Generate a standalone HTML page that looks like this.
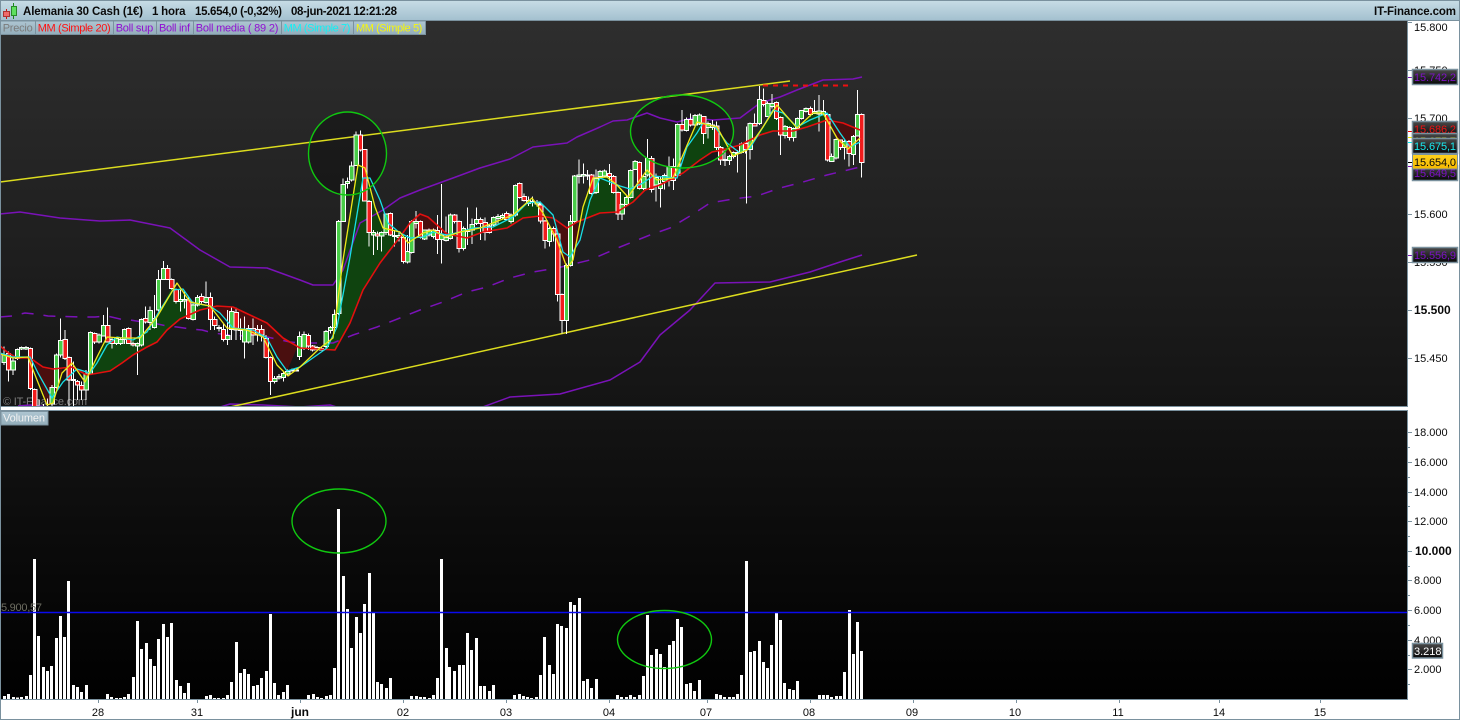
<!DOCTYPE html>
<html lang="es"><head><meta charset="utf-8"><title>Alemania 30 Cash</title>
<style>
html,body{margin:0;padding:0;background:#fff;width:1460px;height:720px;overflow:hidden}
svg{display:block}
text{font-family:"Liberation Sans",sans-serif;font-size:11px}
.b{font-weight:bold;font-size:11.5px;fill:#0a0a0a}
.w{stroke:#fff;stroke-width:3;fill:none;shape-rendering:crispEdges}
rect.g,rect.r{width:13px;stroke:#fff;stroke-width:3;shape-rendering:crispEdges}
rect.g{fill:#48cc48}rect.r{fill:#f01c1c}
.v{stroke:#fff;stroke-width:9;fill:none;shape-rendering:crispEdges}
.l{fill:none;stroke-linejoin:round}
.btn{fill:url(#bt);stroke:#7a919e;stroke-width:1}
.box{stroke:#7a919e;stroke-width:1.5}
.t{stroke:#7a919e;stroke-width:1;fill:none;shape-rendering:crispEdges}
</style></head><body>
<svg width="1460" height="720" viewBox="0 0 1460 720" xmlns="http://www.w3.org/2000/svg">
<defs>
<linearGradient id="top" x1="0" y1="0" x2="0" y2="1"><stop offset="0" stop-color="#c8dde6"/><stop offset="1" stop-color="#a3c0cf"/></linearGradient>
<linearGradient id="bt" x1="0" y1="0" x2="0" y2="1"><stop offset="0" stop-color="#aec6d2"/><stop offset="1" stop-color="#93adba"/></linearGradient>
<linearGradient id="p1" x1="0" y1="0" x2="0" y2="1"><stop offset="0" stop-color="#2e2e2e"/><stop offset="1" stop-color="#141414"/></linearGradient>
<linearGradient id="p2" x1="0" y1="0" x2="0" y2="1"><stop offset="0" stop-color="#141414"/><stop offset="1" stop-color="#000"/></linearGradient>
<linearGradient id="dk" x1="0" y1="0" x2="0" y2="1"><stop offset="0" stop-color="#4a4a4a"/><stop offset="1" stop-color="#060606"/></linearGradient>
<linearGradient id="au" x1="0" y1="0" x2="0" y2="1"><stop offset="0" stop-color="#ffd21c"/><stop offset="1" stop-color="#f5b800"/></linearGradient>
<clipPath id="c1"><rect x="1" y="21" width="1406" height="385"/></clipPath>
</defs>

<rect width="1460" height="720" fill="#fff"/>
<rect x="0" y="0" width="1460" height="20.5" fill="url(#top)"/>
<path d="M0 .5H1460M0 20.5H1460" class="t"/>

<!-- price panel -->
<rect x="1" y="21" width="1406" height="385" fill="url(#p1)"/>
<!-- volume panel -->
<rect x="1" y="410.5" width="1406" height="288.5" fill="url(#p2)"/>
<path d="M.5 0V720M1407.5 21V407M1407.5 410V700M0 406.5H1408M0 410.5H1408M0 699.5H1408M0 719.5H1460M1459.5 0V720" class="t"/>

<g clip-path="url(#c1)">
<ellipse cx="347.5" cy="153.5" rx="39" ry="41.5" fill="#000" fill-opacity=".3"/>
<ellipse cx="682" cy="131.5" rx="51.5" ry="36.5" fill="#000" fill-opacity=".3"/>
<text x="3" y="405" fill="#7c7c7c" textLength="84">© IT-Finance.com</text>

<!-- MA fills -->
<g fill="#0f430f">
<polygon points="90,373 97,357 107,337 133,339 147,332 160,310 173,285 190,302 208,306 200,310 180,319 167,330 157,342 147,347 133,355 122,363 110,371"/>
<polygon points="325,350 333,338 343,260 358,165 365,168 375,207 383,228 400,233 408,238 400,237 380,263 363,290 350,323 335,350"/>
<polygon points="447,235 460,232 480,228 513,215 532,198 543,210 553,218 540,216 523,218 507,228 483,232 467,238"/>
<polygon points="578,222 583,207 593,178 607,177 617,185 628,197 640,182 647,170 657,180 677,178 697,122 717,127 730,148 722,150 712,152 700,160 683,173 660,185 645,190 633,202 617,212 600,213"/>
<polygon points="745,147 763,127 777,105 797,128 813,113 823,113 829,120 807,127 793,131 773,131 760,135"/>
</g>
<g fill="#4a0f0f">
<polygon points="33,358 43,367 53,369 62,368 62,373 53,403 47,405 38,373"/>
<polygon points="210,306 217,306 233,307 250,315 267,323 283,338 297,348 287,371 277,357 267,338 253,330 233,328 220,313"/>
<polygon points="410,223 420,214 428,217 437,225 447,234 430,232 420,235 410,238"/>
<polygon points="553,218 567,228 577,222 580,240 570,257 563,265 557,240"/>
<polygon points="722,150 733,156 745,147 740,145"/>
<polygon points="829,118 843,123 860,130 860,140 848,149 837,138"/>
</g>

<!-- Bollinger -->
<polyline class="l" stroke="#7a12b8" stroke-width="1.5" points="0,214 20,212 60,218 100,221 130,220 170,228 200,250 230,267 267,268 300,280 313,285 333,285 343,270 360,223 383,210 400,198 420,190 453,178 480,168 510,159 533,147 567,143 577,137 600,127 613,121 627,120 647,113 660,118 677,122 693,118 713,120 740,118 760,103 780,97 797,90 823,80 853,79 862,77"/>
<polyline class="l" stroke="#7a12b8" stroke-width="1.5" points="18,406 30,405 50,407 217,408 230,404 263,405 300,407 330,405 340,408 480,408 510,397 560,394 610,380 640,362 660,335 690,310 715,283 770,282 810,272 840,262 862,255"/>
<polyline class="l" stroke="#7a12b8" stroke-width="1.5" stroke-dasharray="12 10" points="0,317 12,316 25,313 35,314 48,316 83,317 95,317 107,316 120,319 130,320 143,322 153,323 167,326 177,327 190,329 202,330 213,333 230,335 247,336 267,337 290,342 300,343 333,343 353,335 377,327 400,318 420,310 443,302 467,292 487,287 510,278 533,272 557,268 590,260 620,247 650,235 670,228 690,216 710,203 733,199 757,196 780,188 803,182 827,175 860,167"/>

<!-- yellow trend lines -->
<path d="M0 182L790 81M230 407L917 255" stroke="#dcdc1e" stroke-width="1.5" fill="none"/>
<path d="M763 85.5H850" stroke="#ee1111" stroke-width="2" stroke-dasharray="5 5" fill="none"/>

<!-- candles zone A -->
<g transform="translate(0 250) scale(.33333)">
<path class="w" d="M12 290V345M25 305V395M39 325V375M52 295V330M65 290V300M78 288V300M91 293V420M104 415V470M117 448V470M130 462V470M143 445V470M156 405V470M169 310V415M182 205V322M195 240V330M207 320V470M220 335V470M232 390V450M245 395V450M258 360V450M271 245V375M284 248V282M297 250V280M310 195V260M323 172V278M336 262V295M349 262V285M362 262V285M373 235V282M386 232V282M399 275V290M412 278V375M424 205V290M437 170V220M450 170V240M463 135V236M475 60V185M490 33V90M503 45V90M515 85V118M528 115V160M541 120V185M553 125V175M566 140V208M579 155V212M592 135V170M605 130V160M618 95V160M631 128V240M644 200V240M657 225V245M670 222V275M683 180V285M695 172V270M708 172V270M721 205V270M733 200V326M746 225V280M759 205V285M772 225V275M785 225V275M798 255V325M811 320V435M824 378V400M837 372V388M850 366V395M863 358V375M876 355V365M889 355V365"/>
<rect class="g" x="6" y="315" height="22"/><rect class="r" x="19" y="310" height="50"/><rect class="g" x="33" y="333" height="27"/><rect class="g" x="46" y="298" height="27"/><rect class="g" x="59" y="293" height="4"/><rect class="g" x="72" y="293" height="4"/><rect class="r" x="85" y="295" height="120"/><rect class="r" x="98" y="418" height="60"/><rect class="g" x="150" y="412" height="50"/><rect class="g" x="163" y="315" height="97"/><rect class="g" x="176" y="272" height="43"/><rect class="r" x="189" y="268" height="57"/><rect class="r" x="201" y="322" height="68"/><rect class="g" x="214" y="388" height="4"/><rect class="r" x="226" y="395" height="10"/><rect class="r" x="239" y="406" height="14"/><rect class="g" x="252" y="372" height="48"/><rect class="g" x="265" y="248" height="124"/><rect class="r" x="278" y="250" height="26"/><rect class="g" x="291" y="255" height="21"/><rect class="g" x="304" y="226" height="32"/><rect class="r" x="317" y="226" height="50"/><rect class="r" x="330" y="268" height="12"/><rect class="g" x="343" y="266" height="14"/><rect class="g" x="356" y="268" height="12"/><rect class="g" x="367" y="238" height="30"/><rect class="r" x="380" y="236" height="44"/><rect class="r" x="393" y="280" height="5"/><rect class="g" x="406" y="280" height="8"/><rect class="g" x="418" y="208" height="77"/><rect class="r" x="431" y="206" height="10"/><rect class="g" x="444" y="182" height="36"/><rect class="g" x="457" y="205" height="27"/><rect class="g" x="469" y="88" height="92"/><rect class="g" x="484" y="55" height="33"/><rect class="r" x="497" y="55" height="33"/><rect class="r" x="509" y="88" height="27"/><rect class="r" x="522" y="118" height="37"/><rect class="g" x="535" y="148" height="7"/><rect class="g" x="547" y="148" height="5"/><rect class="r" x="560" y="150" height="55"/><rect class="g" x="573" y="165" height="43"/><rect class="g" x="586" y="142" height="23"/><rect class="r" x="599" y="140" height="15"/><rect class="g" x="612" y="142" height="16"/><rect class="r" x="625" y="142" height="66"/><rect class="r" x="638" y="208" height="18"/><rect class="g" x="651" y="232" height="4"/><rect class="r" x="664" y="238" height="30"/><rect class="g" x="677" y="256" height="12"/><rect class="g" x="689" y="185" height="53"/><rect class="r" x="702" y="187" height="53"/><rect class="g" x="715" y="238" height="4"/><rect class="g" x="727" y="238" height="38"/><rect class="g" x="740" y="235" height="41"/><rect class="r" x="753" y="236" height="19"/><rect class="r" x="766" y="238" height="17"/><rect class="r" x="779" y="238" height="17"/><rect class="r" x="792" y="265" height="57"/><rect class="r" x="805" y="322" height="72"/><rect class="g" x="818" y="386" height="8"/><rect class="g" x="831" y="380" height="4"/><rect class="g" x="844" y="370" height="12"/><rect class="g" x="857" y="364" height="8"/><rect class="g" x="870" y="360" height="3"/><rect class="g" x="883" y="360" height="3"/>
</g>

<!-- candles zone B -->
<g transform="translate(300 100) scale(.33333)">
<path class="w" d="M-2 695V780M12 695V750M25 700V750M38 735V755M51 738V752M64 742V752M78 690V750M91 678V700M103 628V700M116 360V645M129 235V365M142 232V265M155 185V245M168 95V198M181 92V155M194 148V305M207 300V440M220 390V465M233 395V450M245 395V455M258 340V405M271 338V408M284 390V440M297 393V425M310 408V490M323 405V490M335 360V460M348 333V385M361 362V415M374 388V420M387 385V410M400 385V415M412 345V462M425 252V490M438 350V425M451 340V418M464 342V370M477 362V458M490 380V452M503 322V435M516 355V432M529 322V375M542 352V420M555 352V422M568 372V400M581 350V378M594 342V370M607 340V358M620 335V360M633 340V370M646 254V350M659 248V295M672 280V305M685 290V318M698 290V320M711 300V320M722 305V370M735 360V445M748 380V440M761 380V425M773 398V605M786 580V700M799 490V702M811 345V500M824 225V368M837 178V250M850 190V250M863 210V240M875 222V283M888 208V282"/>
<rect class="g" x="-8" y="710" height="60"/><rect class="g" x="6" y="703" height="42"/><rect class="r" x="19" y="706" height="32"/><rect class="r" x="32" y="738" height="12"/><rect class="g" x="45" y="742" height="6"/><rect class="g" x="58" y="745" height="5"/><rect class="g" x="72" y="695" height="45"/><rect class="g" x="85" y="682" height="10"/><rect class="g" x="97" y="643" height="39"/><rect class="g" x="110" y="365" height="275"/><rect class="g" x="123" y="253" height="112"/><rect class="g" x="136" y="244" height="6"/><rect class="g" x="149" y="198" height="42"/><rect class="g" x="162" y="105" height="91"/><rect class="r" x="175" y="105" height="45"/><rect class="r" x="188" y="148" height="155"/><rect class="r" x="201" y="305" height="92"/><rect class="g" x="214" y="397" height="8"/><rect class="r" x="227" y="402" height="6"/><rect class="g" x="239" y="398" height="10"/><rect class="g" x="252" y="342" height="55"/><rect class="r" x="265" y="340" height="65"/><rect class="g" x="278" y="406" height="4"/><rect class="g" x="291" y="406" height="6"/><rect class="r" x="304" y="412" height="72"/><rect class="g" x="317" y="455" height="31"/><rect class="g" x="329" y="365" height="93"/><rect class="g" x="342" y="365" height="5"/><rect class="r" x="355" y="365" height="48"/><rect class="g" x="368" y="390" height="27"/><rect class="g" x="381" y="390" height="15"/><rect class="g" x="394" y="390" height="20"/><rect class="r" x="406" y="392" height="26"/><rect class="g" x="419" y="405" height="13"/><rect class="g" x="432" y="412" height="10"/><rect class="g" x="445" y="345" height="70"/><rect class="r" x="458" y="345" height="20"/><rect class="r" x="471" y="365" height="80"/><rect class="g" x="484" y="385" height="60"/><rect class="g" x="497" y="390" height="5"/><rect class="g" x="510" y="374" height="16"/><rect class="g" x="523" y="358" height="12"/><rect class="r" x="536" y="358" height="12"/><rect class="r" x="549" y="368" height="30"/><rect class="r" x="562" y="378" height="20"/><rect class="g" x="575" y="352" height="23"/><rect class="g" x="588" y="350" height="5"/><rect class="g" x="601" y="346" height="6"/><rect class="r" x="614" y="340" height="18"/><rect class="g" x="627" y="345" height="20"/><rect class="g" x="640" y="256" height="89"/><rect class="r" x="653" y="250" height="42"/><rect class="r" x="666" y="290" height="12"/><rect class="g" x="679" y="302" height="8"/><rect class="g" x="692" y="304" height="4"/><rect class="g" x="705" y="308" height="4"/><rect class="r" x="716" y="315" height="48"/><rect class="r" x="729" y="363" height="59"/><rect class="g" x="742" y="385" height="39"/><rect class="r" x="755" y="385" height="17"/><rect class="r" x="767" y="402" height="182"/><rect class="r" x="780" y="584" height="78"/><rect class="g" x="793" y="497" height="165"/><rect class="g" x="805" y="365" height="132"/><rect class="g" x="818" y="228" height="137"/><rect class="g" x="831" y="225" height="5"/><rect class="g" x="844" y="223" height="5"/><rect class="g" x="857" y="225" height="3"/><rect class="r" x="869" y="225" height="55"/><rect class="g" x="882" y="235" height="43"/>
</g>

<!-- candles zone C -->
<g transform="translate(600 70) scale(.33333)">
<path class="w" d="M0 300V325M13 298V322M28 282V345M41 315V370M54 365V450M66 400V450M79 378V410M92 298V385M105 270V300M118 275V358M131 315V360M142 207V320M155 258V368M168 310V395M181 320V413M194 310V358M207 260V350M220 265V360M233 160V320M246 120V185M259 142V185M272 130V170M285 132V168M298 130V165M311 138V222M324 155V205M337 150V180M350 155V240M362 228V285M375 240V288M388 255V285M400 244V265M413 240V308M424 218V250M437 218V250M440 170V400M450 158V268M464 130V170M478 48V165M491 55V110M503 95V115M516 72V115M529 95V150M542 140V255M555 165V205M568 170V212M581 172V215M592 142V180M604 120V148M618 112V128M631 110V140M644 90V130M657 75V185M670 90V135M683 130V275M695 250V275M708 205V268M721 208V240M734 210V268M747 210V290M760 195V285M772 60V200M785 130V323"/>
<rect class="g" x="-6" y="305" height="15"/><rect class="g" x="7" y="303" height="15"/><rect class="r" x="22" y="310" height="10"/><rect class="r" x="35" y="320" height="47"/><rect class="r" x="48" y="367" height="65"/><rect class="g" x="60" y="403" height="29"/><rect class="g" x="73" y="382" height="21"/><rect class="g" x="86" y="302" height="80"/><rect class="g" x="99" y="275" height="23"/><rect class="r" x="112" y="278" height="77"/><rect class="g" x="125" y="320" height="35"/><rect class="g" x="136" y="265" height="50"/><rect class="r" x="149" y="265" height="93"/><rect class="g" x="162" y="322" height="23"/><rect class="g" x="175" y="340" height="15"/><rect class="g" x="188" y="316" height="19"/><rect class="g" x="201" y="290" height="42"/><rect class="r" x="214" y="290" height="42"/><rect class="g" x="227" y="163" height="153"/><rect class="r" x="240" y="163" height="17"/><rect class="g" x="253" y="148" height="34"/><rect class="r" x="266" y="148" height="17"/><rect class="g" x="279" y="137" height="28"/><rect class="g" x="292" y="135" height="27"/><rect class="r" x="305" y="140" height="50"/><rect class="g" x="318" y="160" height="12"/><rect class="r" x="331" y="165" height="7"/><rect class="r" x="344" y="168" height="64"/><rect class="r" x="356" y="232" height="38"/><rect class="g" x="369" y="268" height="3"/><rect class="g" x="382" y="260" height="11"/><rect class="g" x="394" y="248" height="12"/><rect class="g" x="407" y="248" height="3"/><rect class="g" x="418" y="222" height="26"/><rect class="r" x="431" y="220" height="18"/><rect class="g" x="444" y="160" height="78"/><rect class="r" x="458" y="160" height="8"/><rect class="g" x="472" y="88" height="72"/><rect class="r" x="485" y="92" height="11"/><rect class="g" x="497" y="100" height="40"/><rect class="g" x="510" y="100" height="10"/><rect class="r" x="523" y="98" height="47"/><rect class="r" x="536" y="143" height="52"/><rect class="g" x="549" y="170" height="27"/><rect class="r" x="562" y="173" height="29"/><rect class="g" x="575" y="175" height="27"/><rect class="g" x="586" y="145" height="30"/><rect class="g" x="598" y="122" height="23"/><rect class="g" x="612" y="115" height="10"/><rect class="r" x="625" y="115" height="19"/><rect class="g" x="638" y="125" height="5"/><rect class="g" x="651" y="123" height="9"/><rect class="g" x="664" y="125" height="8"/><rect class="r" x="677" y="133" height="137"/><rect class="g" x="689" y="260" height="14"/><rect class="g" x="702" y="208" height="56"/><rect class="r" x="715" y="210" height="22"/><rect class="g" x="728" y="215" height="17"/><rect class="r" x="741" y="215" height="35"/><rect class="g" x="754" y="200" height="53"/><rect class="g" x="766" y="133" height="65"/><rect class="r" x="779" y="133" height="144"/>
</g>

<!-- moving averages -->
<polyline class="l" stroke="#e30f0f" stroke-width="1.6" points="0,346 7,352 17,358 30,358 43,367 53,369 72,367 87,375 110,371 122,363 133,355 147,347 157,342 167,330 180,319 200,310 217,306 233,307 250,315 267,323 283,338 300,348 335,350 350,323 363,290 380,263 400,237 410,223 420,214 428,217 437,225 447,234 467,238 483,232 507,228 523,218 540,216 553,218 567,228 577,222 600,213 617,212 633,202 645,190 660,185 683,173 700,160 712,152 722,150 740,145 760,135 773,131 793,131 807,127 827,120 843,123 860,130"/>
<polyline class="l" stroke="#19dfe6" stroke-width="1.3" points="0,353 13,357 30,357 38,373 52,398 63,382 77,369 90,373 97,363 107,345 117,337 133,340 147,332 160,310 173,290 183,289 193,303 210,306 220,313 233,328 253,330 267,338 277,357 287,371 300,367 327,348 337,327 350,257 363,178 370,178 380,200 388,223 400,233 410,238 423,237 433,232 447,235 460,232 473,228 493,227 513,217 527,203 540,202 553,215 563,252 570,257 580,240 590,200 600,178 620,186 630,189 643,183 653,176 677,178 687,147 697,133 703,123 715,127 727,143 740,153 750,148 763,127 773,110 783,113 797,127 810,120 827,113 840,133 850,147 860,142"/>
<polyline class="l" stroke="#f0e81a" stroke-width="1.3" points="0,354 13,358 28,357 37,380 47,405 53,403 62,373 72,363 85,382 97,357 107,337 123,338 140,338 157,317 177,283 190,302 210,306 227,328 247,330 263,337 277,365 288,376 300,367 320,348 333,338 343,260 358,165 365,168 375,207 383,228 400,232 408,243 423,233 433,230 445,237 460,232 480,228 513,215 532,198 543,213 557,240 567,268 573,260 583,207 593,178 607,177 617,185 628,197 647,170 657,180 673,178 697,122 717,127 733,156 747,150 763,127 777,105 797,128 813,113 823,113 837,138 848,149 860,138"/>

<ellipse cx="347.5" cy="153.5" rx="39" ry="41.5" fill="none" stroke="#10c810" stroke-width="1.4"/>
<ellipse cx="682" cy="131.5" rx="51.5" ry="36.5" fill="none" stroke="#10c810" stroke-width="1.4"/>
</g>

<!-- toolbar text + icon -->
<path d="M6.5 9V19" stroke="#c11" stroke-width="1" fill="none" shape-rendering="crispEdges"/>
<path d="M13.5 3V19" stroke="#1a8a1a" stroke-width="1" fill="none" shape-rendering="crispEdges"/>
<rect x="3.5" y="11.5" width="6" height="5" fill="#ee6b6b" stroke="#a33" shape-rendering="crispEdges"/>
<rect x="11.5" y="6.5" width="5" height="9" fill="#5fe05f" stroke="#2a8a2a" shape-rendering="crispEdges"/>
<text class="b" x="23" y="15" textLength="120">Alemania 30 Cash (1€)</text>
<text class="b" x="152" y="15" textLength="33.5">1 hora</text>
<text class="b" x="195" y="15" textLength="87">15.654,0 (-0,32%)</text>
<text class="b" x="291" y="15" textLength="106">08-jun-2021 12:21:28</text>
<text class="b" x="1374" y="15" textLength="82">IT-Finance.com</text>

<!-- legend buttons -->
<rect class="btn" x=".5" y="21" width="35" height="13.5"/>
<rect class="btn" x="35.5" y="21" width="78" height="13.5"/>
<rect class="btn" x="113.5" y="21" width="43" height="13.5"/>
<rect class="btn" x="156.5" y="21" width="37" height="13.5"/>
<rect class="btn" x="193.5" y="21" width="88" height="13.5"/>
<rect class="btn" x="281.5" y="21" width="72" height="13.5"/>
<rect class="btn" x="353.5" y="21" width="72" height="13.5"/>
<text x="2.7" y="31.5" fill="#7b7b7b" textLength="30">Precio</text>
<text x="37.7" y="31.5" fill="#ff1010" textLength="73">MM (Simple 20)</text>
<text x="115.7" y="31.5" fill="#9110d2" textLength="37.5">Boll sup</text>
<text x="159" y="31.5" fill="#9110d2" textLength="31">Boll inf</text>
<text x="195.7" y="31.5" fill="#9110d2" textLength="82.7">Boll media ( 89 2)</text>
<text x="283.7" y="31.5" fill="#12f0f5" textLength="66.7">MM (Simple 7)</text>
<text x="356" y="31.5" fill="#f5f510" textLength="66.3">MM (Simple 5)</text>

<rect x="1" y="411.5" width="47" height="13.5" fill="url(#bt)" stroke="#7a919e"/>
<text x="3" y="421.5" fill="#f2f2f2" textLength="42">Volumen</text>

<!-- volume bars -->
<g transform="translate(0 550) scale(.33333)">
<path class="v" d="M14 438V447M25 432V447M40 441V447M52 443V447M64 441V447M79 438V447M91 375V447M103 27V447M115 258V447M130 351V447M142 363V447M154 348V447M169 264V447M181 198V447M193 261V447M205 93V447M220 405V447M232 411V447M244 426V447M259 405V447M322 432V447M334 441V447M349 444V447M361 444V447M373 441V447M385 432V447M400 381V447M412 213V447M424 297V447M439 279V447M451 327V447M463 348V447M475 267V447M490 222V447M502 261V447M514 219V447M529 390V447M541 408V447M553 429V447M565 399V447M619 438V447M631 435V447M643 444V447M655 444V447M670 444V447M682 435V447M694 396V447M709 276V447M721 369V447M733 357V447M745 372V447M760 408V447M772 405V447M784 384V447M799 363V447M811 192V447M823 399V447M835 435V447M850 426V447M862 405V447M925 435V447M940 432V447M952 441V447M964 444V447M979 438V447M991 435V447M1003 354V447M1015 -123V447M1030 78V447M1042 177V447M1054 294V447M1069 201V447M1081 249V447M1093 162V447M1108 69V447M1120 186V447M1132 396V447M1144 402V447M1159 414V447M1171 384V447M1234 438V447M1249 438V447M1261 441V447M1273 441V447M1288 444V447M1300 435V447M1312 384V447M1324 27V447M1339 294V447M1349 351V447"/>
</g>
<g transform="translate(450 550) scale(.33333)">
<path class="v" d="M13 363V447M28 345V447M40 345V447M52 249V447M64 300V447M79 264V447M91 408V447M103 408V447M118 423V447M130 405V447M193 435V447M208 432V447M220 438V447M232 441V447M244 444V447M259 441V447M271 375V447M283 261V447M298 345V447M310 372V447M322 222V447M334 228V447M349 234V447M361 156V447M373 165V447M388 144V447M400 393V447M412 387V447M424 414V447M439 387V447M502 435V447M514 441V447M529 441V447M541 435V447M553 441V447M568 435V447M580 378V447M592 195V447M604 315V447M619 297V447M631 312V447M643 351V447M658 285V447M670 273V447M682 207V447M694 231V447M709 402V447M721 399V447M733 423V447M748 390V447M799 432V447M811 435V447M823 441V447M838 441V447M850 441V447M862 432V447M874 375V447M889 33V447M901 306V447M913 303V447M928 273V447M940 336V447M952 354V447M964 285V447M979 189V447M991 210V447M1003 399V447M1018 417V447M1030 420V447M1042 393V447M1108 435V447M1120 435V447M1132 435V447M1144 441V447M1159 438V447M1171 438V447M1183 366V447M1198 180V447M1210 312V447M1222 216V447M1234 303V447"/>
</g>
<path d="M1 612.5H1407" stroke="#0a0aee" stroke-width="1.6" fill="none"/>
<text x="1" y="611" fill="#6e6e62" textLength="41">5.900,57</text>
<ellipse cx="339" cy="521" rx="47" ry="32" fill="none" stroke="#10c810" stroke-width="1.4"/>
<ellipse cx="664.5" cy="639.5" rx="47" ry="29" fill="none" stroke="#10c810" stroke-width="1.4"/>

<!-- price axis -->
<path class="t" d="M1408 22.5H1412M1408 70.5H1412M1408 118.5H1412M1408 214.5H1412M1408 262.5H1412M1408 310.5H1412M1408 358.5H1412"/>
<g fill="#0a0a0a">
<text x="1414" y="31">15.800</text>
<text x="1414" y="74">15.750</text>
<text x="1414" y="122">15.700</text>
<text x="1414" y="218">15.600</text>
<text x="1414" y="266">15.550</text>
<text x="1414" y="314" style="font-weight:bold;font-size:12px">15.500</text>
<text x="1414" y="362">15.450</text>
</g>
<path d="M1408 77.5H1412M1408 166.5H1412M1408 255.5H1412" stroke="#7a12b8" fill="none" shape-rendering="crispEdges"/>
<path d="M1408 131.5H1412" stroke="#e00" fill="none" shape-rendering="crispEdges"/>
<path d="M1408 137.5H1412" stroke="#ee0" fill="none" shape-rendering="crispEdges"/>
<path d="M1408 142.5H1412" stroke="#0ee" fill="none" shape-rendering="crispEdges"/>
<path d="M1408 162.5H1412" stroke="#000" fill="none" shape-rendering="crispEdges"/>

<rect class="box" x="1412.5" y="69.5" width="45" height="15" fill="url(#dk)"/>
<text x="1414" y="81" fill="#7c12c4" textLength="42">15.742,2</text>
<rect class="box" x="1412.5" y="121.5" width="45" height="15" fill="url(#dk)"/>
<text x="1414" y="133" fill="#ee1111" textLength="42">15.686,2</text>
<rect class="box" x="1412.5" y="133.5" width="45" height="15" fill="url(#dk)"/>
<text x="1414" y="145" fill="#e8e812" textLength="42">15.675,7</text>
<rect class="box" x="1412.5" y="138.5" width="45" height="15" fill="url(#dk)"/>
<text x="1414" y="150" fill="#18e8ee" textLength="42">15.675,1</text>
<rect class="box" x="1412.5" y="165.5" width="45" height="15" fill="url(#dk)"/>
<text x="1414" y="177" fill="#7c12c4" textLength="42">15.649,5</text>
<rect x="1412.5" y="154.5" width="45" height="14.5" fill="url(#au)" stroke="#7a919e"/>
<text x="1414" y="166" fill="#0a0a0a" textLength="42">15.654,0</text>
<rect class="box" x="1412.5" y="247.5" width="45" height="15" fill="url(#dk)"/>
<text x="1414" y="259" fill="#7c12c4" textLength="42">15.556,9</text>

<!-- volume axis -->
<path class="t" d="M1408 432.5H1412M1408 447.5H1410M1408 462.5H1412M1408 477.5H1410M1408 492.5H1412M1408 506.5H1410M1408 521.5H1412M1408 536.5H1410M1408 551.5H1412M1408 566.5H1410M1408 580.5H1412M1408 595.5H1410M1408 610.5H1412M1408 625.5H1410M1408 640.5H1412M1408 655.5H1410M1408 669.5H1412M1408 684.5H1410"/>
<g fill="#0a0a0a">
<text x="1414" y="436">18.000</text>
<text x="1414" y="466">16.000</text>
<text x="1414" y="496">14.000</text>
<text x="1414" y="525">12.000</text>
<text x="1415" y="555" style="font-weight:bold;font-size:12px">10.000</text>
<text x="1414" y="584">8.000</text>
<text x="1414" y="614">6.000</text>
<text x="1414" y="644">4.000</text>
<text x="1414" y="673">2.000</text>
</g>
<rect class="box" x="1412.5" y="643.5" width="30" height="14.5" fill="url(#dk)"/>
<text x="1414" y="655" fill="#fff">3.218</text>

<!-- date axis -->
<path class="t" d="M98.5 700V703M197.5 700V703M300.5 700V703M403.5 700V703M506.5 700V703M609.5 700V703M707.5 700V703M810.5 700V703M913.5 700V703M1016.5 700V703M1119.5 700V703M1219.5 700V703M1320.5 700V703"/>
<g fill="#0a0a0a" text-anchor="middle">
<text x="98" y="716">28</text>
<text x="197" y="716">31</text>
<text x="300" y="716" style="font-weight:bold;font-size:12px">jun</text>
<text x="403" y="716">02</text>
<text x="506" y="716">03</text>
<text x="609" y="716">04</text>
<text x="706" y="716">07</text>
<text x="809" y="716">08</text>
<text x="912" y="716">09</text>
<text x="1015" y="716">10</text>
<text x="1118" y="716">11</text>
<text x="1219" y="716">14</text>
<text x="1320" y="716">15</text>
</g>
</svg>
</body></html>
